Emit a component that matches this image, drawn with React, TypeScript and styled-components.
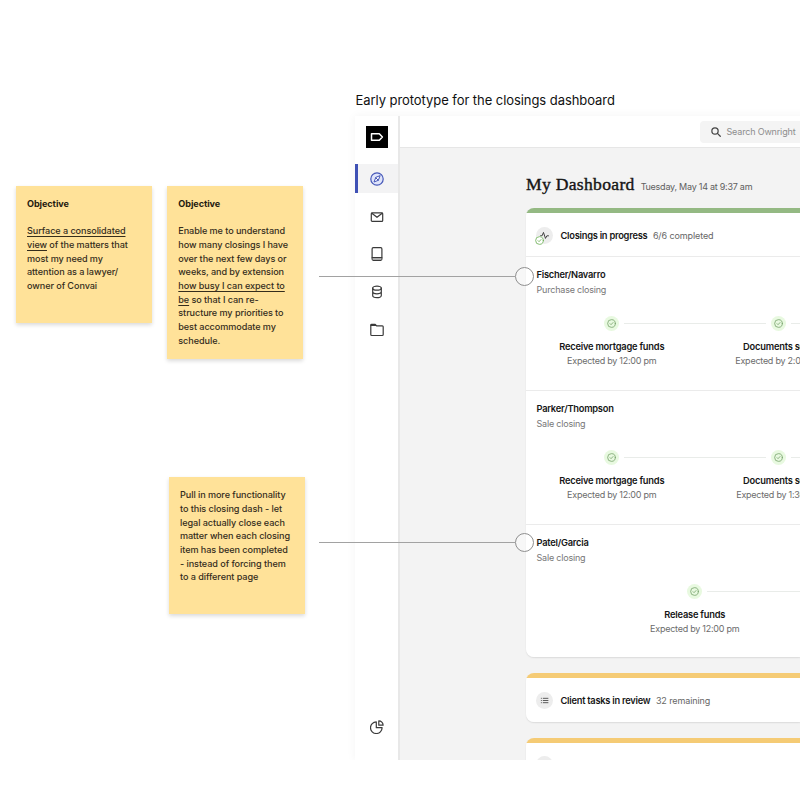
import React from "react";
import styled, { createGlobalStyle } from "styled-components";

const GlobalStyle = createGlobalStyle`
  *, *::before, *::after { box-sizing: border-box; }
  html, body { margin: 0; background: #fff; overflow: hidden; }
`;

const Board = styled.main`
  position: relative;
  width: 800px;
  height: 800px;
  overflow: hidden;
  background: #fff;
  font-family: Inter, sans-serif;
  color: #1c1c1c;
`;

const Note = styled.article<{ $x: number; $y: number; $h: number }>`
  position: absolute;
  left: ${(p) => p.$x}px;
  top: ${(p) => p.$y}px;
  width: 136.5px;
  height: ${(p) => p.$h}px;
  padding: 11.2px 11.5px;
  background: #ffe299;
  box-shadow: 0 2px 4px rgba(0, 0, 0, 0.15);
  font-size: 9.1px;
  font-weight: 500;
  line-height: 13.65px;
  letter-spacing: -0.07px;
  color: #352d1c;
`;

const NoteHeading = styled.h3`
  margin: 0 0 13.65px;
  font-size: 9.1px;
  font-weight: 700;
  line-height: 13.65px;
  color: #1f1a10;
`;

const NoteLine = styled.div`
  white-space: nowrap;
  u {
    text-decoration-thickness: 0.8px;
    text-underline-offset: 2.2px;
    text-decoration-skip-ink: auto;
  }
`;

const FrameTitle = styled.h1`
  position: absolute;
  left: 355.5px;
  top: 90px;
  margin: 0;
  font-size: 13px;
  font-weight: 400;
  line-height: 20px;
  letter-spacing: -0.06px;
  white-space: nowrap;
  color: #111;
`;

const Frame = styled.section`
  position: absolute;
  left: 355px;
  top: 116px;
  width: 445px;
  height: 644px;
  display: flex;
  overflow: hidden;
  background: #f3f3f3;
`;

const FrameShadow = styled.div`
  position: absolute;
  left: 355px;
  top: 116px;
  width: 500px;
  height: 644px;
  box-shadow: 0 0 9px rgba(0, 0, 0, 0.05);
  clip-path: inset(-12px 0 0 -12px);
`;

const Sidebar = styled.nav`
  width: 45px;
  flex: none;
  display: flex;
  flex-direction: column;
  background: #fff;
  border-right: 2px solid #e8e8e8;
`;

const Logo = styled.div`
  width: 22px;
  height: 22px;
  margin: 10px 0 16px 11px;
  flex: none;
  background: #000;
  svg { display: block; }
`;

const NavItem = styled.div<{ $active?: boolean; $h: number }>`
  height: ${(p) => p.$h}px;
  flex: none;
  display: flex;
  align-items: center;
  justify-content: center;
  padding-right: ${(p) => (p.$active ? 2 : 0)}px;
  border-left: ${(p) => (p.$active ? "3px solid #3f51b5" : "0")};
  background: ${(p) => (p.$active ? "#f3f3f4" : "transparent")};
`;

const NavBottom = styled.div`
  margin: auto 0 26px;
  display: flex;
  justify-content: center;
`;

const Main = styled.div`
  flex: 1;
  min-width: 0;
  display: flex;
  flex-direction: column;
`;

const TopBar = styled.header`
  height: 32px;
  flex: none;
  display: flex;
  justify-content: flex-end;
  align-items: center;
  background: #fff;
  border-bottom: 1px solid #e6e6e6;
`;

const Search = styled.div`
  width: 100px;
  height: 22px;
  padding-left: 11px;
  display: flex;
  align-items: center;
  gap: 5.5px;
  border-radius: 4px 0 0 4px;
  background: #f4f4f4;
  font-size: 9px;
  letter-spacing: -0.17px;
  white-space: nowrap;
  color: #8d8d8d;
  svg { flex: none; }
`;

const Content = styled.div`
  padding: 23px 0 0 126px;
  display: flex;
  flex-direction: column;
`;

const TitleRow = styled.div`
  height: 37px;
  display: flex;
  align-items: baseline;
  gap: 6px;
  white-space: nowrap;
`;

const Title = styled.h2`
  margin: 0;
  font-family: "Liberation Serif", serif;
  font-size: 17.6px;
  font-weight: 400;
  line-height: 26px;
  letter-spacing: 0.3px;
  color: #161616;
  -webkit-text-stroke: 0.4px #161616;
`;

const DateText = styled.span`
  font-size: 9px;
  letter-spacing: -0.25px;
  color: #606060;
`;

const Card = styled.section<{ $accent: string; $h: number }>`
  height: ${(p) => p.$h}px;
  flex: none;
  margin-bottom: 16px;
  border-radius: 8px 0 0 8px;
  overflow: hidden;
  background: linear-gradient(${(p) => p.$accent} 0 5px, #fff 5px);
  padding-top: 5px;
  box-shadow: 0 1px 1.5px rgba(0, 0, 0, 0.1);
`;

const CardHeader = styled.div`
  height: 43px;
  padding: 1px 0 0 10px;
  display: flex;
  align-items: center;
  white-space: nowrap;
`;

const Badge = styled.div`
  position: relative;
  width: 17px;
  height: 17px;
  margin-right: 7.5px;
  display: grid;
  place-items: center;
  border-radius: 50%;
  background: #ededed;
`;

const BadgeCheck = styled.span`
  position: absolute;
  left: -1px;
  bottom: -1.5px;
  display: flex;
  border-radius: 50%;
  background: #fff;
`;

const CardTitle = styled.strong`
  font-size: 9.3px;
  font-weight: 600;
  letter-spacing: -0.25px;
  color: #161616;
`;

const CardCount = styled.span`
  margin-left: 5.5px;
  font-size: 9px;
  letter-spacing: -0.1px;
  color: #666;
`;

const Matter = styled.div`
  height: 134px;
  padding: 10px 0 0;
  border-top: 1px solid #ebebeb;
`;

const MatterName = styled.div`
  padding-left: 10.5px;
  font-size: 9.3px;
  font-weight: 600;
  line-height: 15px;
  letter-spacing: -0.24px;
  color: #161616;
`;

const MatterKind = styled.div`
  padding-left: 10.5px;
  font-size: 9px;
  line-height: 16px;
  letter-spacing: -0.2px;
  color: #777;
`;

const Steps = styled.div<{ $offset: number }>`
  margin: 18px 0 0 ${(p) => p.$offset}px;
  display: grid;
  grid-template-columns: repeat(3, 166.5px);
`;

const Step = styled.div`
  display: flex;
  flex-direction: column;
  align-items: center;
  white-space: nowrap;
`;

const Track = styled.div<{ $first?: boolean }>`
  align-self: stretch;
  display: grid;
  grid-template-columns: 1fr 15px 1fr;
  align-items: center;
  column-gap: 5px;
  &::before, &::after {
    content: "";
    height: 1px;
    background: #e9ece9;
  }
  &::before { visibility: ${(p) => (p.$first ? "hidden" : "visible")}; }
  &::after { margin-right: -1px; }
`;

const StepDot = styled.div`
  width: 15px;
  height: 15px;
  display: grid;
  place-items: center;
  border-radius: 50%;
  background: #e8f9e0;
`;

const StepTitle = styled.div`
  margin-top: 8px;
  font-size: 9.3px;
  font-weight: 600;
  line-height: 15px;
  letter-spacing: -0.21px;
  color: #161616;
`;

const StepTime = styled.div`
  font-size: 9px;
  line-height: 14px;
  letter-spacing: -0.25px;
  color: #6c6c6c;
`;

const Pointer = styled.div<{ $y: number }>`
  position: absolute;
  left: 319px;
  top: ${(p) => p.$y}px;
  width: 215px;
  display: flex;
  align-items: center;
  &::before {
    content: "";
    flex: 1;
    height: 1px;
    background: #a2a2a2;
  }
  &::after {
    content: "";
    width: 19px;
    height: 19px;
    border: 1px solid #8f8f8f;
    border-radius: 50%;
    background: rgba(255, 255, 255, 0.35);
  }
`;

type IconProps = { children: React.ReactNode; size?: number; color?: string; weight?: number };

const Icon = ({ children, size = 14, color = "#3a3a3a", weight = 1.2 }: IconProps) => (
  <svg width={size} height={size} viewBox="0 0 14 14" fill="none" stroke={color}
    strokeWidth={weight} strokeLinejoin="round" strokeLinecap="round">
    {children}
  </svg>
);

const CheckIcon = ({ size = 9, color = "#7ba56f" }: { size?: number; color?: string }) => (
  <Icon size={size} color={color} weight={1.3}>
    <circle cx="7" cy="7" r="6" />
    <path d="M4.7 7.2 6.3 8.8 9.4 5.5" />
  </Icon>
);

type StepData = { title: string; time: string };
type MatterData = { name: string; kind: string; offset: number; steps: StepData[] };

const matters: MatterData[] = [
  {
    name: "Fischer/Navarro", kind: "Purchase closing", offset: 2.5,
    steps: [
      { title: "Receive mortgage funds", time: "Expected by 12:00 pm" },
      { title: "Documents sent", time: "Expected by 2:00 pm" },
    ],
  },
  {
    name: "Parker/Thompson", kind: "Sale closing", offset: 2.5,
    steps: [
      { title: "Receive mortgage funds", time: "Expected by 12:00 pm" },
      { title: "Documents sent", time: "Expected by 1:30 pm" },
    ],
  },
  {
    name: "Patel/Garcia", kind: "Sale closing", offset: 85.5,
    steps: [
      { title: "Release funds", time: "Expected by 12:00 pm" },
      { title: "", time: "" },
    ],
  },
];

const ListIcon = () => (
  <Icon size={9} color="#555" weight={1.5}>
    <path d="M2 3.6h.2M2 7h.2M2 10.4h.2M5 3.6H12.4M5 7H12.4M5 10.4H12.4" />
  </Icon>
);

export default function App() {
  return (
    <Board>
      <GlobalStyle />

      <Note $x={15.5} $y={186} $h={136.5}>
        <NoteHeading>Objective</NoteHeading>
        <NoteLine><u>Surface a consolidated</u></NoteLine>
        <NoteLine><u>view</u> of the matters that</NoteLine>
        <NoteLine>most my need my</NoteLine>
        <NoteLine>attention as a lawyer/</NoteLine>
        <NoteLine>owner of Convai</NoteLine>
      </Note>

      <Note $x={166.8} $y={186} $h={173}>
        <NoteHeading>Objective</NoteHeading>
        <NoteLine>Enable me to understand</NoteLine>
        <NoteLine>how many closings I have</NoteLine>
        <NoteLine>over the next few days or</NoteLine>
        <NoteLine>weeks, and by extension</NoteLine>
        <NoteLine><u>how busy I can expect to</u></NoteLine>
        <NoteLine><u>be</u> so that I can re-</NoteLine>
        <NoteLine>structure my priorities to</NoteLine>
        <NoteLine>best accommodate my</NoteLine>
        <NoteLine>schedule.</NoteLine>
      </Note>

      <Note $x={168.5} $y={477.3} $h={136.5}>
        <NoteLine>Pull in more functionality</NoteLine>
        <NoteLine>to this closing dash - let</NoteLine>
        <NoteLine>legal actually close each</NoteLine>
        <NoteLine>matter when each closing</NoteLine>
        <NoteLine>item has been completed</NoteLine>
        <NoteLine>- instead of forcing them</NoteLine>
        <NoteLine>to a different page</NoteLine>
      </Note>

      <FrameTitle>Early prototype for the closings dashboard</FrameTitle>
      <FrameShadow />

      <Frame>
        <Sidebar>
          <Logo>
            <svg width="22" height="22" viewBox="0 0 22 22" fill="none" stroke="#fff" strokeWidth="1.5" strokeLinejoin="round">
              <path d="M5.5 7.7H13.3L16.4 11 13.3 14.3H5.5Z" />
            </svg>
          </Logo>
          <NavItem $active $h={29}>
            <Icon color="#4658b8">
              <circle cx="7" cy="7" r="6.2" fill="#dfe4fa" />
              <path d="M10 4 8.3 8.3 4 10 5.7 5.7ZM5.7 5.7 8.3 8.3" fill="#fff" strokeWidth="1" />
            </Icon>
          </NavItem>
          <NavItem $h={47}>
            <Icon>
              <rect x="1.3" y="2.8" width="11.4" height="8.6" rx="0.9" />
              <path d="M1.8 3.2 7 7.3 12.2 3.2" />
            </Icon>
          </NavItem>
          <NavItem $h={27}>
            <Icon>
              <rect x="2.1" y="0.7" width="9.8" height="12.6" rx="1.2" />
              <path d="M2.2 10.6H11.8" />
              <path d="M2.8 12H11.2" stroke="#888" />
            </Icon>
          </NavItem>
          <NavItem $h={49}>
            <Icon>
              <ellipse cx="7" cy="3.2" rx="4.3" ry="2" />
              <path d="M2.7 3.2V10.6C2.7 13.4 11.3 13.4 11.3 10.6V3.2M2.7 6.8C2.7 9.5 11.3 9.5 11.3 6.8" />
            </Icon>
          </NavItem>
          <NavItem $h={27}>
            <Icon>
              <path d="M0.8 11.6V2.1C0.8 1.6 1.1 1.3 1.6 1.3H5.2L6.6 2.9H12.3C12.9 2.9 13.2 3.2 13.2 3.8V11.6C13.2 12.2 12.9 12.5 12.3 12.5H1.7C1.1 12.5 0.8 12.2 0.8 11.6Z" />
              <path d="M1 2.4H5.8" />
            </Icon>
          </NavItem>
          <NavBottom>
            <Icon>
              <path d="M6.3 1.9A5.8 5.8 0 1 0 12.1 7.7H6.3Z" />
              <path d="M8.8 0.9V5.2H13.1A4.3 4.3 0 0 0 8.8 0.9Z" />
            </Icon>
          </NavBottom>
        </Sidebar>

        <Main>
          <TopBar>
            <Search>
              <Icon size={10} color="#444" weight={1.7}>
                <circle cx="5.6" cy="5.6" r="4.4" />
                <path d="M9 9 13 13" />
              </Icon>
              Search Ownright
            </Search>
          </TopBar>

          <Content>
            <TitleRow>
              <Title>My Dashboard</Title>
              <DateText>Tuesday, May 14 at 9:37 am</DateText>
            </TitleRow>

            <Card $accent="#94b983" $h={449}>
              <CardHeader>
                <Badge>
                  <Icon size={9} color="#333" weight={1.4}>
                    <path d="M0.8 7.5H3.2L5.4 2.2 8.5 11.5 10.7 7.5H13.2" />
                  </Icon>
                  <BadgeCheck><CheckIcon color="#6cae55" /></BadgeCheck>
                </Badge>
                <CardTitle>Closings in progress</CardTitle>
                <CardCount>6/6 completed</CardCount>
              </CardHeader>
              {matters.map((m) => (
                <Matter key={m.name}>
                  <MatterName>{m.name}</MatterName>
                  <MatterKind>{m.kind}</MatterKind>
                  <Steps $offset={m.offset}>
                    {m.steps.map((s, i) => (
                      <Step key={i}>
                        <Track $first={i === 0}>
                          <StepDot><CheckIcon /></StepDot>
                        </Track>
                        <StepTitle>{s.title}</StepTitle>
                        <StepTime>{s.time}</StepTime>
                      </Step>
                    ))}
                  </Steps>
                </Matter>
              ))}
            </Card>

            <Card $accent="#f5cb75" $h={48.5}>
              <CardHeader>
                <Badge><ListIcon /></Badge>
                <CardTitle>Client tasks in review</CardTitle>
                <CardCount>32 remaining</CardCount>
              </CardHeader>
            </Card>

            <Card $accent="#f5cb75" $h={48.5}>
              <CardHeader>
                <Badge />
              </CardHeader>
            </Card>
          </Content>
        </Main>
      </Frame>

      <Pointer $y={266.5} />
      <Pointer $y={532.5} />
    </Board>
  );
}
